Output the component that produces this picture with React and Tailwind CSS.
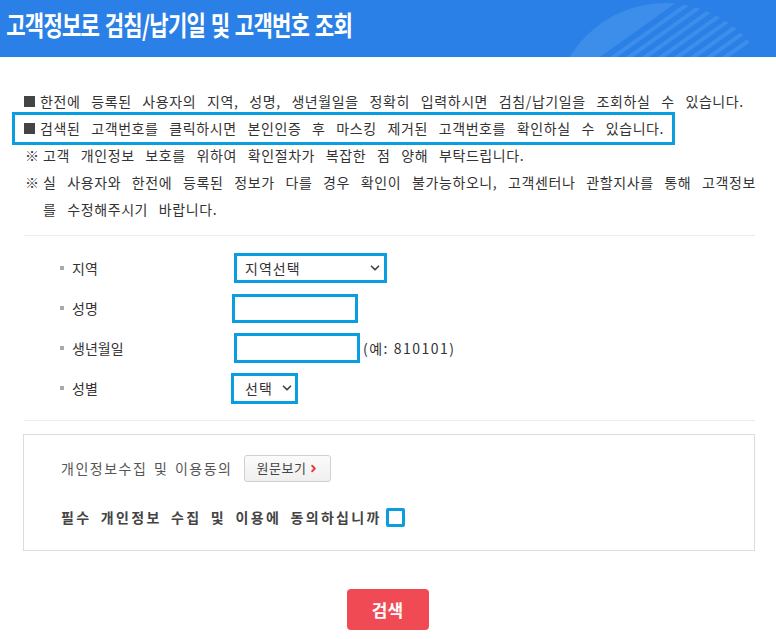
import { ChevronDown, ChevronRight } from 'lucide-react'

function HeaderDecor() {
  return (
    <svg className="absolute right-0 top-0" width="220" height="57" viewBox="556 0 220 57">
      <defs>
        <clipPath id="circ">
          <circle cx="665" cy="114" r="111" />
        </clipPath>
      </defs>
      <g clipPath="url(#circ)" fill="#3d8dea">
        <polygon points="540,0 680,0 600,57 540,57" />
        {[0, 1, 2, 3, 4, 5, 6, 7].map((i) => (
          <polygon
            key={i}
            points={`${690 + i * 16},0 ${697 + i * 16},0 ${617 + i * 16},57 ${610 + i * 16},57`}
          />
        ))}
      </g>
    </svg>
  )
}

function Bullet() {
  return <span className="inline-block w-[11px] h-[11px] bg-[#444] mr-[5px] shrink-0" />
}

function FormRow({ label, children }) {
  return (
    <div className="flex items-center h-[40px]">
      <div className="w-[172px] flex items-center pl-[36px] text-[14px] text-[#333]">
        <span className="inline-block w-[4px] h-[4px] bg-[#aaa] mr-[8px]" />
        {label}
      </div>
      {children}
    </div>
  )
}

export default function App() {
  return (
    <div className="w-[776px] h-[639px] bg-white overflow-hidden font-['Noto_Sans_CJK_KR',sans-serif] text-[#333]">
      <div className="relative h-[57px] bg-[#2a80e6] overflow-hidden">
        <HeaderDecor />
        <h1 className="relative pl-[8px] pt-[5px] text-[27px] font-bold text-white tracking-[-1px] [word-spacing:2px] leading-[40px] whitespace-nowrap origin-left scale-x-[0.78]">
          고객정보로 검침/납기일 및 고객번호 조회
        </h1>
      </div>

      <div className="pl-[24px] pr-[21px] pt-[31px] text-[14px]">
        <div className="tracking-[0.6px] [word-spacing:7px] whitespace-nowrap">
          <div className="h-[27px] leading-[27px] flex items-center">
            <Bullet />
            한전에 등록된 사용자의 지역, 성명, 생년월일을 정확히 입력하시면 검침/납기일을 조회하실 수 있습니다.
          </div>
          <div className="-ml-[12px] -my-[3px] w-[663px] h-[33px] border-[3px] border-[#0a9ee0] pl-[9px] flex items-center">
            <Bullet />
            검색된 고객번호를 클릭하시면 본인인증 후 마스킹 제거된 고객번호를 확인하실 수 있습니다.
          </div>
          <div className="h-[27px] leading-[27px] flex">
            <span className="w-[19px] pl-[1px]">※</span>
            고객 개인정보 보호를 위하여 확인절차가 복잡한 점 양해 부탁드립니다.
          </div>
          <div className="leading-[27px] flex">
            <span className="w-[19px] shrink-0 pl-[1px]">※</span>
            <span>
              실 사용자와 한전에 등록된 정보가 다를 경우 확인이 불가능하오니, 고객센터나 관할지사를 통해 고객정보
              <br />
              를 수정해주시기 바랍니다.
            </span>
          </div>
        </div>

        <div className="mt-[12px] border-t border-[#ececec]" />

        <div className="pt-[12px] pb-[12px]">
          <FormRow label="지역">
            <div className="ml-[38px] w-[153px] h-[30px] border-[3px] border-[#0a9ee0] flex items-center justify-between pl-[8px] pr-[2px] text-[14px] tracking-[1px]">
              지역선택
              <ChevronDown size={14} strokeWidth={3} className="text-[#444]" />
            </div>
          </FormRow>
          <FormRow label="성명">
            <div className="ml-[36px] w-[126px] h-[29px] border-[3px] border-[#0a9ee0]" />
          </FormRow>
          <FormRow label="생년월일">
            <div className="ml-[38px] w-[126px] h-[30px] border-[3px] border-[#0a9ee0]" />
            <span className="ml-[3px] text-[14px] tracking-[1.5px]">(예: 810101)</span>
          </FormRow>
          <FormRow label="성별">
            <div className="ml-[35px] w-[67px] h-[31px] border-[3px] border-[#0a9ee0] flex items-center justify-between pl-[11px] pr-[1px] text-[14px] tracking-[1px]">
              선택
              <ChevronDown size={14} strokeWidth={3} className="text-[#444]" />
            </div>
          </FormRow>
        </div>

        <div className="border-t border-[#ececec]" />

        <div className="mt-[13px] -ml-[1px] h-[117px] border border-[#dcdcdc] pl-[37px] pt-[19px]">
          <div className="flex items-center h-[28px]">
            <span className="text-[#555] tracking-[1.5px] [word-spacing:2px]">개인정보수집 및 이용동의</span>
            <button className="ml-[12px] h-[27px] w-[87px] flex items-center justify-center gap-[2px] border border-[#d0d0d0] rounded-[3px] bg-gradient-to-b from-[#fbfbfb] to-[#efefef] text-[13px] text-[#444] tracking-[0.5px]">
              원문보기
              <ChevronRight size={11} strokeWidth={4} className="text-[#e8383d]" />
            </button>
          </div>
          <div className="flex items-center mt-[24px] h-[22px]">
            <span className="font-bold text-[#444] tracking-[2.3px] [word-spacing:4px]">필수 개인정보 수집 및 이용에 동의하십니까</span>
            <span className="ml-[4px] w-[19px] h-[19px] border-[3px] border-[#0a9ee0] bg-white rounded-[2px]" />
          </div>
        </div>

        <div className="flex justify-center mt-[38px] pr-[4px]">
          <button className="w-[82px] h-[41px] rounded-[4px] bg-[#f04b55] text-white font-bold text-[17px]">
            검색
          </button>
        </div>
      </div>
    </div>
  )
}
